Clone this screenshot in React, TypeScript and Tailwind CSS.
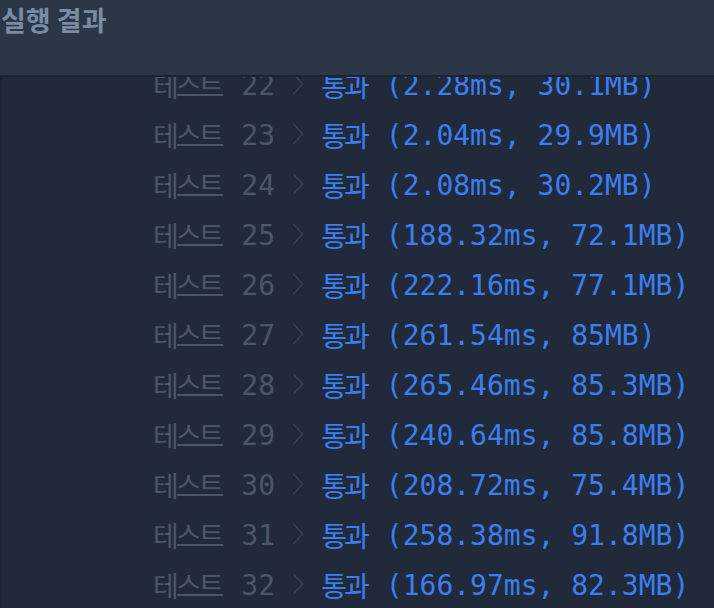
import React from 'react';

const results = [
  { n: 22, time: '2.28ms', mem: '30.1MB' },
  { n: 23, time: '2.04ms', mem: '29.9MB' },
  { n: 24, time: '2.08ms', mem: '30.2MB' },
  { n: 25, time: '188.32ms', mem: '72.1MB' },
  { n: 26, time: '222.16ms', mem: '77.1MB' },
  { n: 27, time: '261.54ms', mem: '85MB' },
  { n: 28, time: '265.46ms', mem: '85.3MB' },
  { n: 29, time: '240.64ms', mem: '85.8MB' },
  { n: 30, time: '208.72ms', mem: '75.4MB' },
  { n: 31, time: '258.38ms', mem: '91.8MB' },
  { n: 32, time: '166.97ms', mem: '82.3MB' },
];

const mono = "font-['DejaVu_Sans_Mono','Noto_Sans_CJK_KR',monospace]";
const kr = "font-['Noto_Sans_CJK_KR',sans-serif] text-[28px] tracking-[-3px] translate-y-[2px]";

const Chevron: React.FC = () => (
  <svg width="12" height="22" viewBox="0 0 12 22" className="shrink-0">
    <path d="M1.5 1 L10.5 11 L1.5 21" fill="none" stroke="#354052" strokeWidth="1.6" />
  </svg>
);

const App: React.FC = () => {
  return (
    <div className="w-[714px] h-[608px] overflow-hidden bg-[#212a3a] flex flex-col">
      {/* Header */}
      <div className="h-[77px] shrink-0 bg-[#2b3647] border-b-2 border-[#1c2431] pl-[2px]">
        <h2 className="text-[27px] font-bold leading-[40px] text-[#7a8ba3] font-['Noto_Sans_CJK_KR',sans-serif] -ml-[1px]">
          실행 결과
        </h2>
      </div>

      {/* Result rows (scrolled) */}
      <div className="flex-1 overflow-hidden border-l-2 border-[#1c2431]">
        <div className="-mt-[18px]">
          {results.map((r) => (
            <div key={r.n} className={`h-[50px] flex items-center pl-[151px] text-[28px] leading-[50px] ${mono}`}>
              <span className="flex items-baseline text-[#4a5669]">
                <span className={kr}>테스트</span>
                <span className="ml-[20px] w-[34px]">{r.n}</span>
              </span>
              <span className="ml-[17px] mr-[17px] flex items-center">
                <Chevron />
              </span>
              <span className="flex items-baseline text-[#3b7ef0]">
                <span className={kr}>통과</span>
                <span className="ml-[19px] whitespace-pre">({r.time}, {r.mem})</span>
              </span>
            </div>
          ))}
        </div>
      </div>
    </div>
  );
};

export default App;
